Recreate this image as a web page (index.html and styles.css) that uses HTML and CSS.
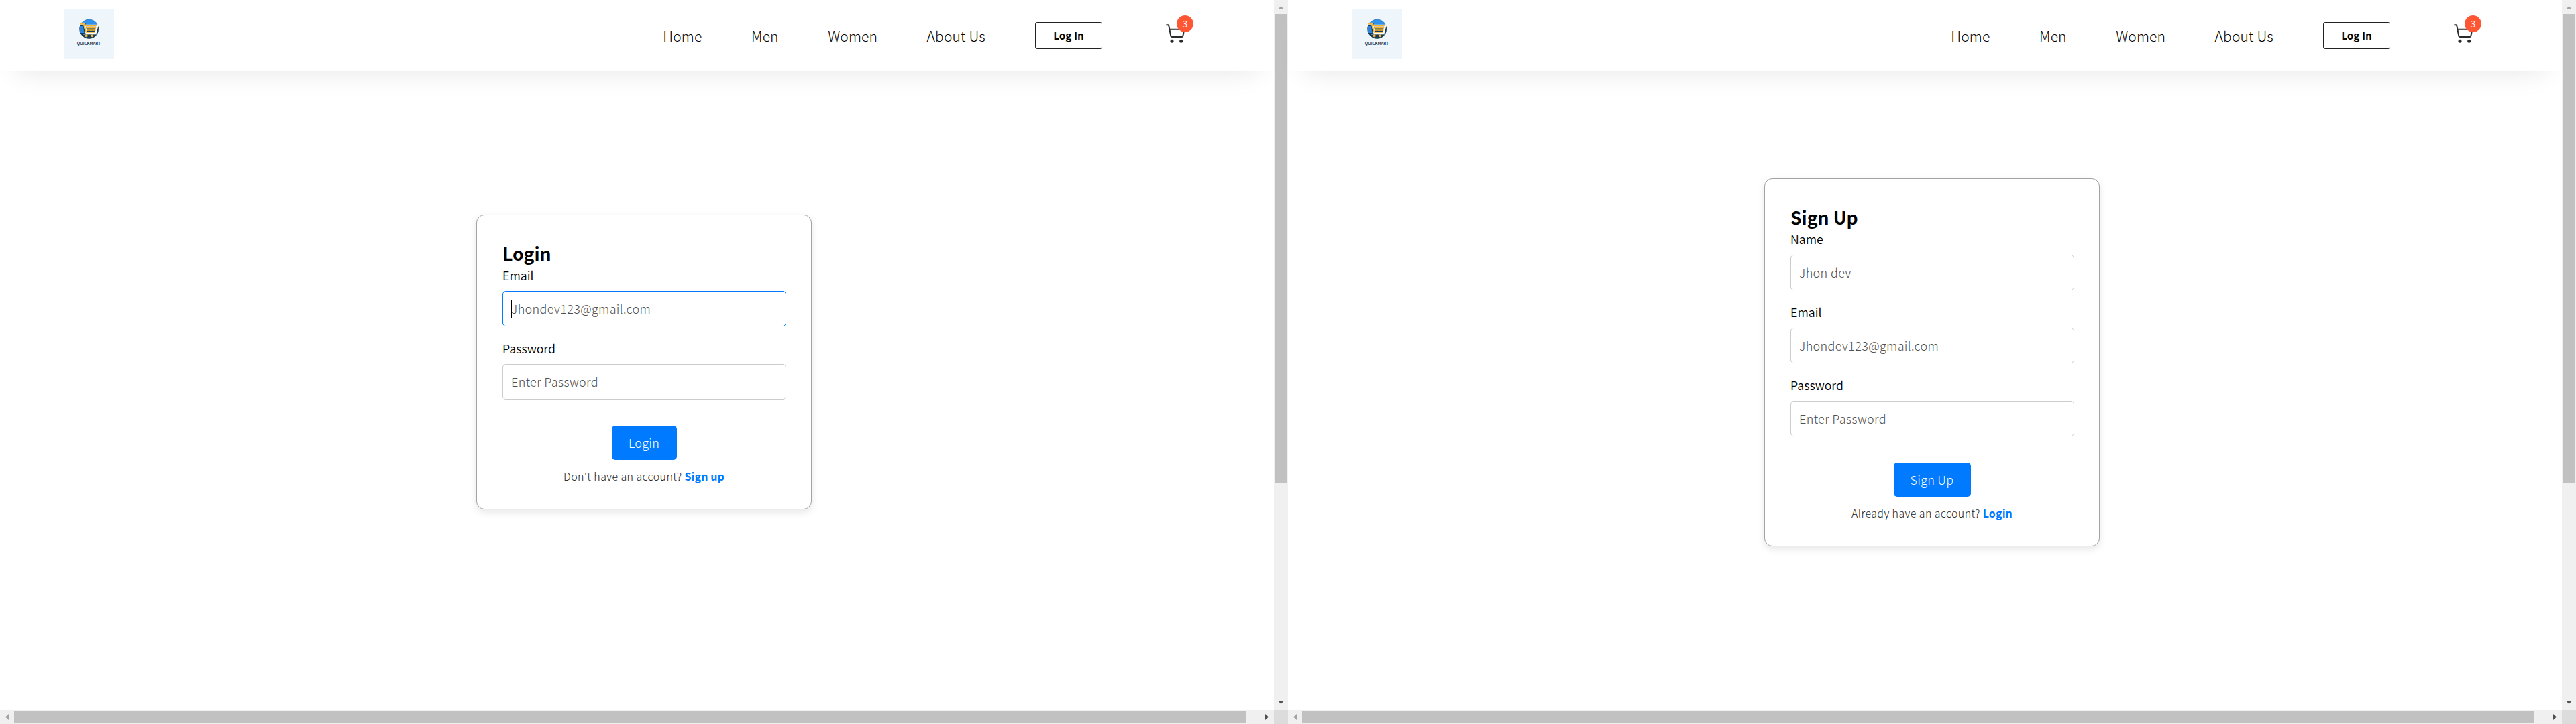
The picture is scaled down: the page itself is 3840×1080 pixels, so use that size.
FILE: index.html
```html
<!DOCTYPE html>
<html lang="en">
<head>
<meta charset="utf-8">
<title>QuickMart</title>
<link rel="stylesheet" href="styles.css">
</head>
<body>
<svg class="defs" aria-hidden="true">
  <symbol id="logo" viewBox="0 0 225 225">
    <rect width="225" height="225" fill="#eef6fb"/>
    <circle cx="113" cy="91" r="43" fill="#173d59"/>
    <path d="M77 68 A43 43 0 0 1 148 66 L150 72 H99 L96 62 H77Z" fill="#3291ea"/>
    <path d="M74 78 H86 L92 108 H74 Q69 92 74 78Z" fill="#2b83dc"/>
    <path d="M74 67 H91 L101 107 H142 L150 76 H97" fill="none" stroke="#fff" stroke-width="9"/>
    <path d="M74 68 H90 L100 105 H140 M96 76 H148 M100 86 H145 M102 96 H143" fill="none" stroke="#f5b52e" stroke-width="5"/>
    <path d="M84 113 H148" stroke="#fff" stroke-width="4"/>
    <circle cx="101" cy="121" r="6" fill="#f5b52e"/>
    <circle cx="127" cy="121" r="6" fill="#f5b52e"/>
    <text class="logo-text" x="112" y="162" text-anchor="middle" textLength="105" lengthAdjust="spacingAndGlyphs">QUICKMART</text>
    <path d="M78 175 H146" stroke="#ccd6dc" stroke-width="2"/>
  </symbol>
  <symbol id="cart" viewBox="54 78 84 87">
    <path d="M55 82 H64 Q66 82 67 86 L76 131 Q77 135 81 135 H125 Q129 135 130 131 L136 101 H71" fill="none" stroke="#2b2b2b" stroke-width="6"/>
    <circle cx="81" cy="154" r="7.5" fill="#2b2b2b"/>
    <circle cx="122" cy="154" r="7.5" fill="#2b2b2b"/>
  </symbol>
</svg>

<div class="windows">
  <section class="window">
    <div class="page">
      <header class="header">
        <svg class="logo"><use href="#logo"/></svg>
        <nav class="nav">
          <a>Home</a><a>Men</a><a>Women</a><a>About Us</a>
        </nav>
        <button class="header-login">Log In</button>
        <div class="cart">
          <svg class="cart-icon"><use href="#cart"/></svg>
          <span class="badge">3</span>
        </div>
      </header>
      <main class="main">
        <form class="card">
          <h2 class="title">Login</h2>
          <div class="group">
            <label class="label">Email</label>
            <div class="field focused"><input class="input" type="email" placeholder="Jhondev123@gmail.com"></div>
          </div>
          <div class="group">
            <label class="label">Password</label>
            <div class="field"><input class="input" type="password" placeholder="Enter Password"></div>
          </div>
          <button class="submit" type="button">Login</button>
          <p class="switch">Don't have an account? <a class="link">Sign up</a></p>
        </form>
      </main>
    </div>
    <div class="bar vertical"><i class="arrow up"></i><div class="thumb"></div><i class="arrow down"></i></div>
    <div class="bar horizontal"><i class="arrow left"></i><div class="thumb"></div><i class="arrow right"></i></div>
    <div class="corner"></div>
  </section>

  <section class="window">
    <div class="page">
      <header class="header">
        <svg class="logo"><use href="#logo"/></svg>
        <nav class="nav">
          <a>Home</a><a>Men</a><a>Women</a><a>About Us</a>
        </nav>
        <button class="header-login">Log In</button>
        <div class="cart">
          <svg class="cart-icon"><use href="#cart"/></svg>
          <span class="badge">3</span>
        </div>
      </header>
      <main class="main">
        <form class="card">
          <h2 class="title">Sign Up</h2>
          <div class="group">
            <label class="label">Name</label>
            <div class="field"><input class="input" type="text" placeholder="Jhon dev"></div>
          </div>
          <div class="group">
            <label class="label">Email</label>
            <div class="field"><input class="input" type="email" placeholder="Jhondev123@gmail.com"></div>
          </div>
          <div class="group">
            <label class="label">Password</label>
            <div class="field"><input class="input" type="password" placeholder="Enter Password"></div>
          </div>
          <button class="submit wide" type="button">Sign Up</button>
          <p class="switch">Already have an account? <a class="link">Login</a></p>
        </form>
      </main>
    </div>
    <div class="bar vertical"><i class="arrow up"></i><div class="thumb"></div><i class="arrow down"></i></div>
    <div class="bar horizontal"><i class="arrow left"></i><div class="thumb"></div><i class="arrow right"></i></div>
    <div class="corner"></div>
  </section>
</div>
</body>
</html>
```
FILE: styles.css
```css
* { box-sizing: border-box; margin: 0; padding: 0; }

body {
  font-family: "Noto Sans CJK SC", "Noto Sans", sans-serif;
  font-weight: 300;
  background: #fff;
  color: #000;
  overflow: hidden;
}
button, input { font: inherit; }
.defs { display: none; }

.windows { display: grid; grid-template-columns: 1fr 1fr; height: 1080px; }
.window { display: grid; grid-template-columns: 1fr 21px; grid-template-rows: 1fr 21px; }

.header {
  display: flex;
  align-items: center;
  height: 106px;
  padding: 0 133px 0 95px;
  background: #fff;
  box-shadow: 0 25px 42px -25px rgba(0, 0, 0, .11);
}
.logo { width: 75px; height: 75px; margin-bottom: 5px; }
.logo-text { font: 700 18px "Noto Sans CJK SC", sans-serif; fill: #1d3c55; }

.nav {
  display: flex;
  gap: 73.5px;
  margin: 0 74px 0 auto;
  font-size: 21px;
  line-height: 30px;
  letter-spacing: .15px;
  color: #000;
}
.header-login {
  width: 100px;
  height: 40px;
  padding-bottom: 2px;
  border: 1px solid #222;
  border-radius: 3px;
  background: #fff;
  color: #000;
  font-size: 15.3px;
  font-weight: 700;
}
.cart { position: relative; width: 28px; height: 29px; margin: 0 0 5px 95px; }
.cart-icon { display: block; width: 28px; height: 29px; }
.badge {
  position: absolute;
  left: 16px;
  top: -13px;
  width: 25px;
  height: 25px;
  border-radius: 50%;
  background: #ff5733;
  color: #fff;
  font-size: 14px;
  font-weight: 350;
  line-height: 24px;
  text-align: center;
}

.main { display: flex; align-items: center; justify-content: center; height: 868px; padding-left: 21px; }
.card {
  display: flex;
  flex-direction: column;
  width: 500px;
  padding: 38px 38px 37px;
  border: 1px solid #a3a3a3;
  border-radius: 12px;
  background: #fff;
  box-shadow: 0 4px 12px rgba(0, 0, 0, .1);
}
.title { padding-top: 1px; margin-bottom: 2px; font-size: 26.6px; font-weight: 700; line-height: 36px; }
.group { margin-bottom: 20px; }
.label {
  display: block;
  margin-bottom: 12px;
  padding-top: 1px;
  font-size: 17.8px;
  font-weight: 350;
  line-height: 23px;
}
.field { position: relative; }
.input {
  display: block;
  width: 423px;
  height: 53px;
  padding: 0 12px 1px;
  border: 1px solid #ccc;
  border-radius: 5px;
  outline: none;
  background: #fff;
  font-size: 18px;
  letter-spacing: .35px;
}
.input::placeholder { color: #505050; opacity: 1; }
.focused .input { border-color: #007bff; }
.focused::after {
  content: "";
  position: absolute;
  left: 13px;
  top: 14px;
  width: 1px;
  height: 26px;
  background: #000;
}
.submit {
  align-self: center;
  width: 97px;
  height: 51px;
  margin-top: 19px;
  padding-bottom: 1px;
  border: 0;
  border-radius: 5px;
  background: #007bff;
  color: #fff;
  font-size: 18px;
  letter-spacing: .25px;
}
.submit.wide { width: 115px; }
.switch {
  margin-top: 12px;
  font-size: 16px;
  line-height: 24px;
  letter-spacing: .4px;
  text-align: center;
  color: #222;
  white-space: nowrap;
}
.link { color: #007bff; font-weight: 700; letter-spacing: .1px; }

.bar { display: flex; align-items: center; justify-content: space-between; background: #f0f0f0; }
.vertical { flex-direction: column; padding: 9px 2px; }
.vertical .thumb { width: 17px; height: 700px; margin: 7px 0 auto; }
.horizontal { padding: 0 8px; }
.horizontal .thumb { width: 1837px; height: 17px; margin: 0 auto 0 8px; }
.thumb { background: #c1c1c1; }
.corner { background: #dcdcdc; }
.arrow { background: #505050; flex: none; }
.up, .down { width: 9px; height: 5px; }
.left, .right { width: 5px; height: 9px; }
.up, .left { background: #a3a3a3; }
.up { clip-path: polygon(50% 0, 100% 100%, 0 100%); }
.down { clip-path: polygon(0 0, 100% 0, 50% 100%); }
.left { clip-path: polygon(100% 0, 100% 100%, 0 50%); }
.right { clip-path: polygon(0 0, 100% 50%, 0 100%); }
```
